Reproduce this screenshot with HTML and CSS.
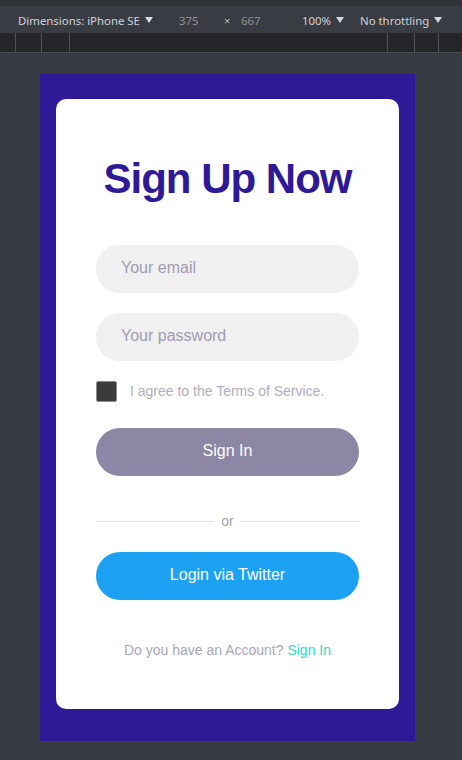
FILE: index.html
```html
<!DOCTYPE html>
<html lang="en">
<head>
<meta charset="utf-8">
<title>Sign Up Now</title>
<link rel="stylesheet" href="styles.css">
</head>
<body>
<div class="devbar">
  <div class="dev-item dev-dims">Dimensions: iPhone SE <svg class="caret" width="8" height="6" viewBox="0 0 8 6"><path d="M0 0H8L4 6Z" fill="#d6d8dc"/></svg></div>
  <div class="dev-item dev-w">375</div>
  <div class="dev-item dev-x">×</div>
  <div class="dev-item dev-h">667</div>
  <div class="dev-item dev-zoom">100% <svg class="caret" width="8" height="6" viewBox="0 0 8 6"><path d="M0 0H8L4 6Z" fill="#d6d8dc"/></svg></div>
  <div class="dev-item dev-throttle">No throttling <svg class="caret" width="8" height="6" viewBox="0 0 8 6"><path d="M0 0H8L4 6Z" fill="#d6d8dc"/></svg></div>
</div>
<div class="ruler">
  <span class="seg seg-a"></span>
  <span class="seg seg-b tick"></span>
  <span class="seg seg-c tick"></span>
  <span class="seg seg-fill tick"></span>
  <span class="seg seg-d tick"></span>
  <span class="seg seg-e tick"></span>
  <span class="seg seg-f tick"></span>
</div>
<main class="viewport">
  <div class="frame">
    <div class="card">
      <h1 class="title">Sign Up Now</h1>
      <input class="field field-email" type="email" placeholder="Your email">
      <input class="field field-pass" type="password" placeholder="Your password">
      <label class="agree">
        <span class="box"></span>
        <span class="agree-text">I agree to the Terms of Service.</span>
      </label>
      <button class="btn btn-signin">Sign In</button>
      <div class="divider"><span class="line"></span><span class="or">or</span><span class="line"></span></div>
      <button class="btn btn-twitter">Login via Twitter</button>
      <p class="footer">Do you have an Account? <a class="link" href="#">Sign In</a></p>
    </div>
  </div>
</main>
</body>
</html>
```
FILE: styles.css
```css
* { box-sizing: border-box; }
html, body { margin: 0; padding: 0; }
body {
  background: #383b43;
  width: 462px;
  height: 760px;
  overflow: hidden;
  font-family: "Liberation Sans", Arial, sans-serif;
}
.devbar {
  height: 33px;
  border-top: 6px solid #303238;
  background: #3a3c43;
  display: flex;
  align-items: center;
  padding-left: 18px;
  padding-top: 1px;
  font-family: "Noto Sans", "Open Sans", sans-serif;
  font-size: 11.4px;
  color: #d0d3d8;
  white-space: nowrap;
}
.dev-item { display: flex; align-items: center; flex: none; }
.caret { margin-left: 5px; }
.dev-dims { width: 161px; }
.dev-w { width: 45px; color: #8f9298; }
.dev-x { width: 17px; color: #b5b8bd; }
.dev-h { width: 61px; color: #8f9298; }
.dev-zoom { width: 58px; }
.ruler {
  height: 20px;
  background: #25262a;
  border-bottom: 1px solid #4b4d53;
  display: flex;
}
.seg { display: block; height: 100%; flex: none; }
.tick { border-left: 1px solid #505257; }
.seg-a { width: 15px; }
.seg-b { width: 26px; }
.seg-c { width: 28px; }
.seg-fill { flex: 1; }
.seg-d { width: 27px; }
.seg-e { width: 24px; }
.seg-f { width: 24px; }
.viewport { padding: 21px 0 0 40px; }
.frame {
  width: 375px;
  height: 667px;
  background: #2e1a97;
  padding: 25px 16px 32px;
  display: flex;
}
.card {
  flex: 1;
  background: #fff;
  border-radius: 10px;
  padding: 40px;
  display: flex;
  flex-direction: column;
}
.title {
  margin: 16px 0 0;
  font-size: 42px;
  line-height: 48px;
  font-weight: 700;
  letter-spacing: -1px;
  text-align: center;
  color: #2e1a96;
}
.field {
  display: block;
  width: 100%;
  height: 48px;
  border: 0;
  border-radius: 24px;
  background: #f0f0f0;
  padding: 0 25px 2px;
  font-family: "Liberation Sans", Arial, sans-serif;
  font-size: 16px;
  color: #333;
  outline: none;
}
.field::placeholder { color: #a09cb2; }
.field-email { margin-top: 42px; }
.field-pass { margin-top: 20px; }
.agree {
  margin-top: 20px;
  display: flex;
  align-items: center;
  height: 21px;
}
.box {
  width: 21px;
  height: 21px;
  background: #3b3b3b;
  border: 1px solid #8a8a8a;
  border-radius: 2px;
  flex: none;
}
.agree-text {
  margin-left: 13px;
  margin-bottom: 2px;
  font-size: 14px;
  color: #b0adbd;
}
.btn {
  display: block;
  width: 100%;
  height: 48px;
  border: 0;
  border-radius: 24px;
  font-family: "Liberation Sans", Arial, sans-serif;
  font-size: 16px;
  color: #fff;
  padding: 0 0 2px;
}
.btn-signin { margin-top: 26px; background: #8b87a5; }
.divider {
  margin-top: 35px;
  height: 20px;
  display: flex;
  align-items: center;
}
.line { flex: 1; height: 1px; background: #e3e3e6; }
.or {
  padding: 0 7px;
  font-size: 14px;
  color: #a4a3ad;
  line-height: 20px;
}
.btn-twitter { margin-top: 21px; background: #1da1f2; }
.footer {
  margin: 41px 0 0;
  text-align: center;
  font-size: 14px;
  line-height: 18px;
  color: #a8a6b8;
}
.link { color: #2fd8c6; text-decoration: none; }
```
